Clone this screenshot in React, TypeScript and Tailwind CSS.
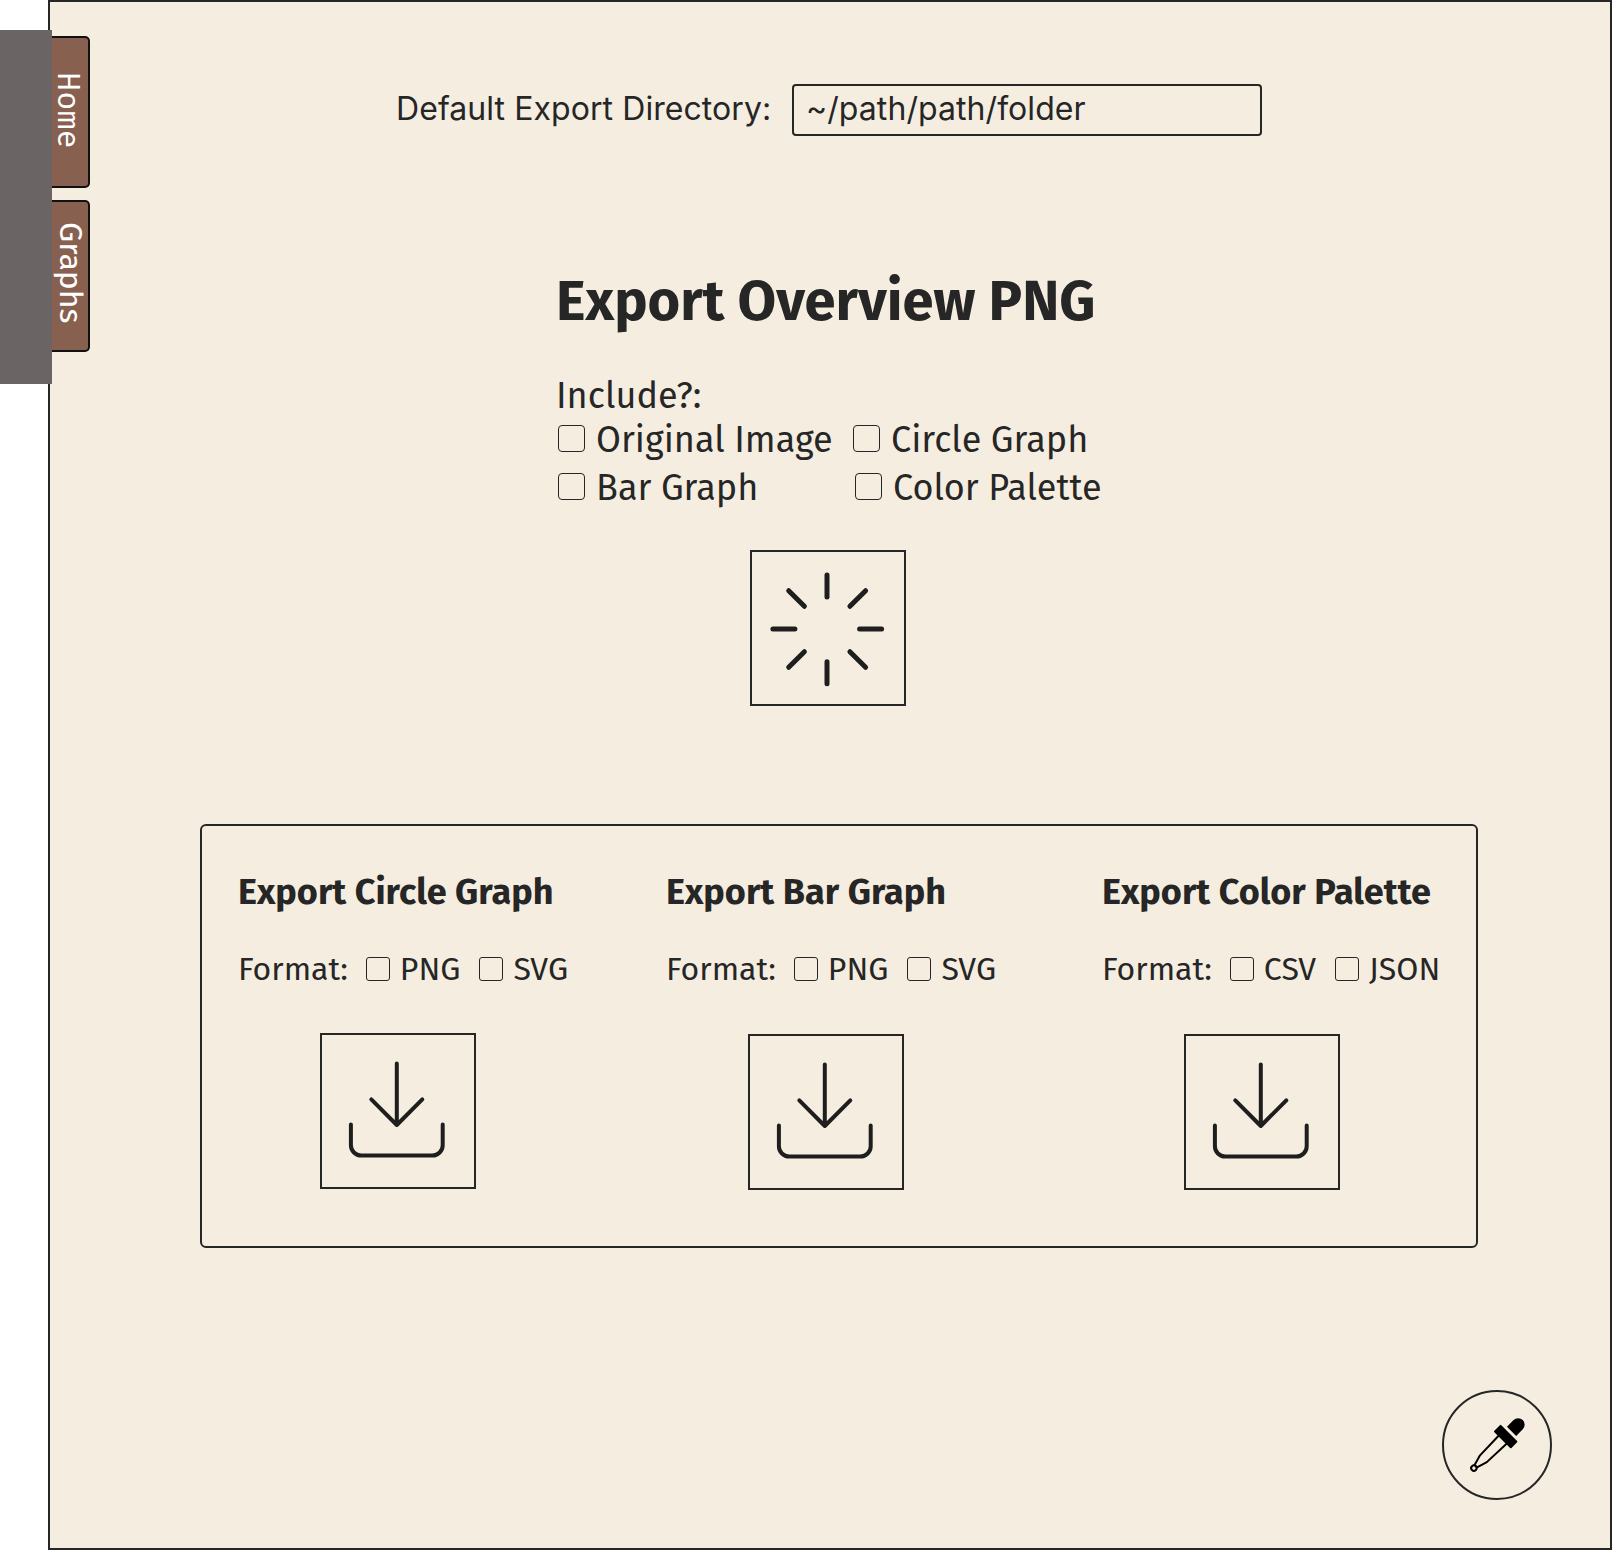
import React from "react";

function Checkbox({ label, large = false, className = "" }: { label: string; large?: boolean; className?: string }) {
  return (
    <label className={`flex items-center whitespace-nowrap ${className}`}>
      <input
        type="checkbox"
        className={`shrink-0 appearance-none border border-[#262626] ${
          large ? "mr-[11px] mb-[3px] size-[27px] rounded-[4px]" : "mr-2.5 mb-px size-6 rounded-[3px]"
        }`}
      />
      {label}
    </label>
  );
}

function SpinnerIcon() {
  return (
    <svg viewBox="0 0 156 156" className="size-[156px] shrink-0" fill="none" stroke="#1e1e1e" strokeWidth="5" strokeLinecap="round">
      <path d="M77 25v22M77 111.700v22M22.900 79h22M109.600 79h22M38.700 40.700l15.700 15.600M99.900 101.700l15.700 15.600M38.700 117.300l15.700 -15.600M99.900 56.300l15.700 -15.600" />
    </svg>
  );
}

function DownloadIcon() {
  return (
    <svg viewBox="0 0 156 156" className="size-[156px] shrink-0" fill="none" stroke="#1e1e1e" strokeWidth="4" strokeLinecap="round" strokeLinejoin="round">
      <path d="M76.800 30.500v61.500M51.300 66.300l25.500 25.700l25.500 -25.700M30.900 91.500v20.700a10.300 10.300 0 0 0 10.300 10.300h71.200a10.300 10.300 0 0 0 10.300 -10.300v-20.700" />
    </svg>
  );
}

function EyedropperIcon() {
  return (
    <svg viewBox="0 0 110 110" className="size-[110px] shrink-0" fill="none">
      <g transform="translate(55 55) rotate(45)">
        <path d="M-5.900 -20V-29.300a6.500 6.500 0 0 1 13 0V-20Z" fill="#000" />
        <rect x="-12" y="-17.100" width="24.300" height="9.900" rx="1" fill="#000" />
        <path d="M-5.400 -8L-4.700 19.300L-1.700 30H1.700L4.900 19.300L5.900 -8" stroke="#000" strokeWidth="2" strokeLinejoin="round" />
        <circle cx="0" cy="32.700" r="2.700" stroke="#000" strokeWidth="2" fill="#f5eee0" />
      </g>
    </svg>
  );
}

function IconButton({ children, className = "" }: { children: React.ReactNode; className?: string }) {
  return (
    <button className={`flex size-[156px] shrink-0 items-center justify-center border-2 border-[#262626] ${className}`}>
      {children}
    </button>
  );
}

function ExportCard({ title, formats, className = "", buttonClass }: { title: string; formats: string[]; className?: string; buttonClass: string }) {
  return (
    <section className={`flex shrink-0 flex-col whitespace-nowrap ${className}`}>
      <h2 className="text-[36px] leading-[44px] font-bold">{title}</h2>
      <div className="mt-9 flex items-center gap-[19px] text-[32px] leading-[38px]">
        <span className="-mr-px">Format:</span>
        {formats.map((f) => (
          <Checkbox key={f} label={f} />
        ))}
      </div>
      <IconButton className={buttonClass}>
        <DownloadIcon />
      </IconButton>
    </section>
  );
}

export default function App() {
  return (
    <div className="flex h-[1550px] w-[1612px] bg-white font-['Fira_Sans','Noto_Sans',sans-serif] text-[#262626]">
      <aside className="relative z-10 mt-[30px] h-[354px] w-[52px] shrink-0 bg-[#6b6464]" />
      <main className="-ml-1 flex flex-1 border-2 border-[#262626] bg-[#f5eee0]">
        <nav className="flex w-10 shrink-0 flex-col gap-3 pt-[34px] text-[32px] text-white">
          <a className="flex h-[152px] w-10 rounded-r-[5px] border-2 border-l-0 border-[#111] bg-[#876050] pt-[34px] font-['Fira_Mono','Fira_Code','Liberation_Mono',monospace] leading-[38px] [writing-mode:vertical-rl]">
            Home
          </a>
          <a className="flex h-[152px] w-10 rounded-r-[5px] border-2 border-l-0 border-[#111] bg-[#876050] pt-5 leading-[34px] [writing-mode:vertical-rl]">
            Graphs
          </a>
        </nav>
        <div className="flex flex-1 flex-col">
          <div className="mt-[82px] ml-[306px] flex h-[52px] items-center font-['Inter',sans-serif] text-[32px] leading-[38px] tracking-[0.07px]">
            <span className="mb-0.5 w-[396px] whitespace-nowrap">Default Export Directory:</span>
            <div className="flex h-[52px] w-[470px] items-center rounded-[4px] border-2 border-[#262626] pb-0.5 pl-3">
              ~/path/path/folder
            </div>
          </div>

          <section className="mt-[132px] ml-[466px] flex flex-col text-[36px] leading-[44px] whitespace-nowrap">
            <h1 className="text-[56px] leading-[67px] font-bold">Export Overview PNG</h1>
            <p className="mt-[39px]">Include?:</p>
            <div className="flex h-11 items-center pl-0.5">
              <Checkbox large label="Original Image" className="w-[295px]" />
              <Checkbox large label="Circle Graph" />
            </div>
            <div className="mt-1 flex h-11 items-center pl-0.5">
              <Checkbox large label="Bar Graph" className="w-[297px]" />
              <Checkbox large label="Color Palette" />
            </div>
            <IconButton className="mt-10 ml-[194px]">
              <SpinnerIcon />
            </IconButton>
          </section>

          <div className="mt-[118px] ml-[110px] flex h-[424px] w-[1278px] shrink-0 rounded-[6px] border-2 border-[#262626] pt-[44px] pl-9">
            <ExportCard title="Export Circle Graph" formats={["PNG", "SVG"]} className="w-[428px]" buttonClass="mt-[45px] ml-[82px]" />
            <ExportCard title="Export Bar Graph" formats={["PNG", "SVG"]} className="w-[436px]" buttonClass="mt-[46px] ml-[82px]" />
            <ExportCard title="Export Color Palette" formats={["CSV", "JSON"]} buttonClass="mt-[46px] ml-[82px]" />
          </div>

          <button className="mt-[142px] mr-[58px] flex size-[110px] shrink-0 items-center justify-center self-end rounded-full border-2 border-[#262626]">
            <EyedropperIcon />
          </button>
        </div>
      </main>
    </div>
  );
}
